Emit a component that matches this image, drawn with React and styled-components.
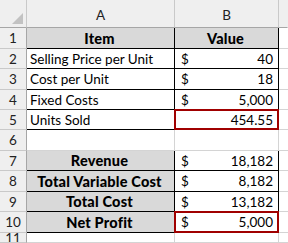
import React from 'react';
import styled, { createGlobalStyle } from 'styled-components';

const GlobalStyle = createGlobalStyle`
  html, body {
    margin: 0;
    padding: 0;
    height: 100%;
    background: #ffffff;
    overflow: hidden;
  }
  body {
    font-family: Lato, "Open Sans", sans-serif;
  }
`;

const rows = [
  { n: 1, h: 21, kind: 'head', a: 'Item', b: 'Value' },
  { n: 2, h: 20, kind: 'input', a: 'Selling Price per Unit', cur: true, b: '40' },
  { n: 3, h: 21, kind: 'input', a: 'Cost per Unit', cur: true, b: '18' },
  { n: 4, h: 20, kind: 'input', a: 'Fixed Costs', cur: true, b: '5,000' },
  { n: 5, h: 20, kind: 'input', a: 'Units Sold', b: '454.55', red: true },
  { n: 6, h: 21, kind: 'blank' },
  { n: 7, h: 20, kind: 'total', a: 'Revenue', cur: true, b: '18,182' },
  { n: 8, h: 21, kind: 'total', a: 'Total Variable Cost', cur: true, b: '8,182' },
  { n: 9, h: 20, kind: 'total', a: 'Total Cost', cur: true, b: '13,182' },
  { n: 10, h: 21, kind: 'total', a: 'Net Profit', cur: true, b: '5,000', red: true },
  { n: 11, h: 10, kind: 'blank' },
];

const App = () => {
  return (
    <>
      <GlobalStyle />
      <Sheet>
        <Row $h={28}>
          <Corner>
            <Triangle />
          </Corner>
          <ColHead>A</ColHead>
          <ColHead>B</ColHead>
          <ColHead $last />
        </Row>
        {rows.map((r) => {
          const boxed = r.kind !== 'blank';
          const isHead = r.kind === 'head';
          const gray = isHead || r.kind === 'total';
          return (
            <Row key={r.n} $h={r.h}>
              <RowHead>{r.n}</RowHead>
              <Cell $boxed={boxed} $gray={gray} $bold={gray} $center={gray}>
                {r.a}
              </Cell>
              <Cell
                $boxed={boxed}
                $gray={isHead}
                $bold={isHead}
                $center={isHead}
                $money={!isHead}
                $red={r.red}
              >
                {isHead ? (
                  r.b
                ) : (
                  <>
                    {r.cur && <span>$</span>}
                    {r.b && <Amount>{r.b}</Amount>}
                  </>
                )}
              </Cell>
              <Spare />
            </Row>
          );
        })}
      </Sheet>
    </>
  );
};

const Sheet = styled.div`
  width: 288px;
  height: 243px;
  overflow: hidden;
  display: flex;
  flex-direction: column;
  color: #000;
`;

const Row = styled.div`
  display: grid;
  grid-template-columns: 27px 148px 104px 1fr;
  height: ${(p) => p.$h}px;
  flex-shrink: 0;
`;

const Corner = styled.div`
  position: relative;
  background: #efefef;
  border-right: 1px solid #c9c9c9;
  border-bottom: 1px solid #a6a6a6;
`;

const Triangle = styled.div`
  position: absolute;
  right: 3px;
  bottom: 3px;
  width: 0;
  height: 0;
  border-left: 11px solid transparent;
  border-bottom: 11px solid #c2c2c2;
`;

const ColHead = styled.div`
  background: #efefef;
  border-right: 1px solid ${(p) => (p.$last ? 'transparent' : '#c9c9c9')};
  border-bottom: 1px solid #a6a6a6;
  display: flex;
  align-items: flex-end;
  justify-content: center;
  padding-bottom: 4px;
  font-size: 13.5px;
  color: #222;
`;

const RowHead = styled.div`
  background: #efefef;
  border-right: 1px solid #a6a6a6;
  border-bottom: 1px solid #c9c9c9;
  display: flex;
  align-items: center;
  justify-content: center;
  font-size: 13.5px;
  color: #222;
  overflow: hidden;
`;

const Cell = styled.div`
  position: relative;
  display: flex;
  align-items: center;
  justify-content: ${(p) => (p.$center ? 'center' : 'flex-start')};
  padding-left: ${(p) => (p.$money ? '6px' : '3px')};
  padding-right: 5px;
  background: ${(p) => (p.$gray ? '#d9d9d9' : '#ffffff')};
  border-right: 1px solid ${(p) => (p.$boxed ? '#000' : '#d4d4d4')};
  border-bottom: 1px solid ${(p) => (p.$boxed ? '#000' : '#d4d4d4')};
  font-size: ${(p) => (p.$bold ? '14.5px' : '13.5px')};
  font-weight: ${(p) => (p.$bold ? 900 : 400)};
  letter-spacing: ${(p) => (p.$bold ? '0.2px' : '0')};
  white-space: nowrap;

  &::after {
    content: '';
    display: ${(p) => (p.$red ? 'block' : 'none')};
    position: absolute;
    left: -1px;
    top: -1px;
    right: -1px;
    bottom: -1px;
    border: 2px solid #a00000;
    pointer-events: none;
  }
`;

const Amount = styled.span`
  margin-left: auto;
`;

const Spare = styled.div`
  border-bottom: 1px solid #d4d4d4;
`;

export default App;
